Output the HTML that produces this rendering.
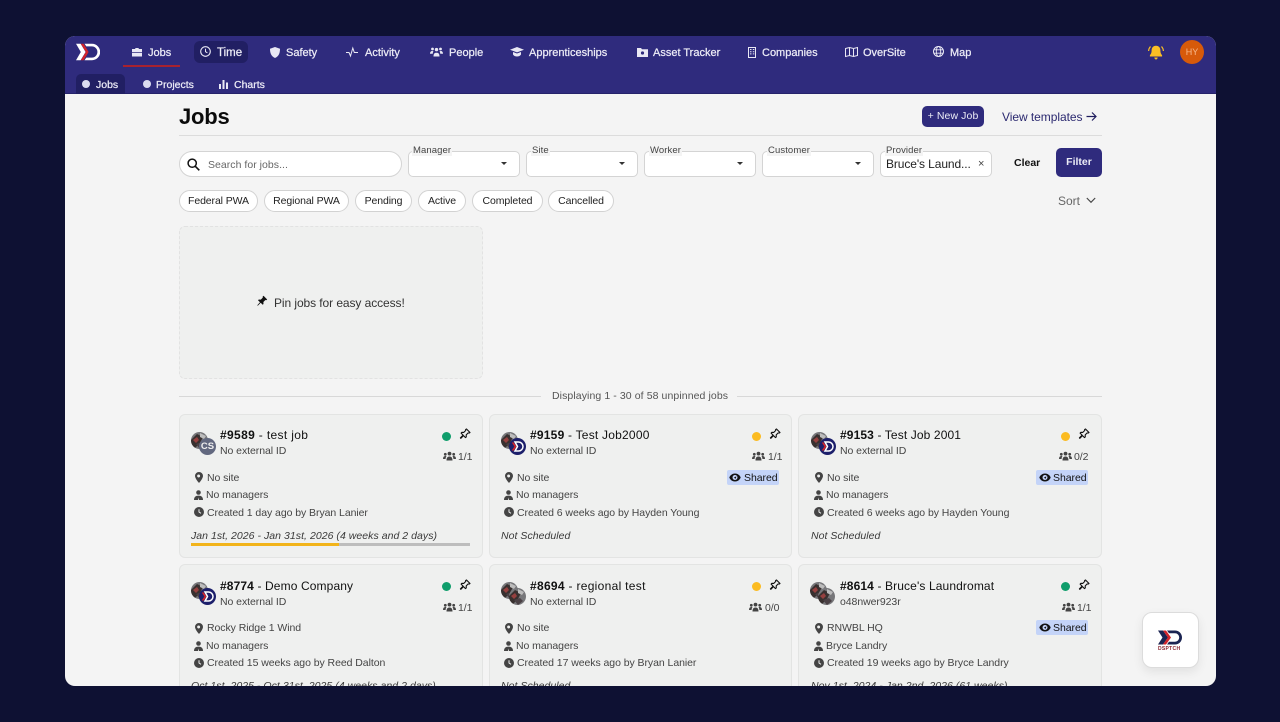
<!DOCTYPE html>
<html><head><meta charset="utf-8"><style>
html,body{margin:0;padding:0;width:1280px;height:722px;overflow:hidden;background:#0e1133;font-family:"Liberation Sans",sans-serif}
#f{position:absolute;left:65px;top:36px;width:1151px;height:650px;border-radius:10px;overflow:hidden;background:#f4f4f4}
#in{position:absolute;left:-65px;top:-36px;width:1280px;height:722px}
.a{position:absolute}
.t{position:absolute;white-space:nowrap;line-height:14px;height:14px;margin-top:-7px}
.n{font-size:11px;color:#eceBf6;-webkit-text-stroke:.25px #eceBf6;margin-top:-6.5px}
.i{position:absolute;overflow:visible}
.p{border-radius:50%;overflow:hidden}
.sel{position:absolute;top:151px;height:24px;width:110px;background:#fff;border:1px solid #d4d4d4;border-radius:5px}
.lab{position:absolute;top:145px;height:11px;line-height:11px;font-size:9.5px;color:#444;background:#f4f4f4;padding:0 1px;letter-spacing:.1px}
.car{position:absolute;top:162px;width:0;height:0;border-left:3.5px solid transparent;border-right:3.5px solid transparent;border-top:3.5px solid #333}
.chip{position:absolute;top:190px;height:20px;line-height:20px;background:#fff;border:1px solid #d2d2d2;border-radius:11px;text-align:center;font-size:10.5px;color:#222;letter-spacing:-.1px}
.card{position:absolute;width:302px;height:142px;background:#eff0ef;border:1px solid #e3e4e3;border-radius:6px}
.ti{font-size:12px;color:#111;letter-spacing:.12px}.ti b{font-weight:bold}
.s{font-size:10.5px;color:#444;letter-spacing:-.06px}
.it{font-style:italic;font-size:10.5px;color:#3a3a3a;letter-spacing:.04px}
.dot{position:absolute;width:9px;height:9px;border-radius:50%}
.sh{position:absolute;width:52px;height:15px;background:#c4d4f8;border-radius:2px}
.av{position:absolute;width:17px;height:17px;border-radius:50%;overflow:hidden}
</style></head><body>
<svg width="0" height="0" style="position:absolute">
<defs>
<symbol id="pin" viewBox="0 0 12 12"><path d="M7.500 1l3.500 3.500-1 .6-.8-.2-2 2 .1 1.900-.8.8-2-2L1.800 10.300l-.4-.4 2.700-2.800-2-2 .8-.8 1.900.1 2-2-.2-.8z" fill="none" stroke="#111" stroke-width="1.100" stroke-linejoin="round"/></symbol>
<symbol id="ppl" viewBox="0 0 13 10"><circle cx="6.500" cy="2.600" r="1.900" fill="#444"/><circle cx="2.300" cy="3.300" r="1.400" fill="#444"/><circle cx="10.700" cy="3.300" r="1.400" fill="#444"/><path d="M3.500 9.500c0-3 1.200-4 3-4s3 1 3 4zM0 8c0-2 .8-3 2.300-3 .6 0 1 .2 1.200.4C2.900 6 2.600 7 2.600 8zM13 8c0-2-.8-3-2.300-3-.6 0-1 .2-1.200.4.600.6.900 1.600.900 2.600z" fill="#444"/></symbol>
<symbol id="loc" viewBox="0 0 8 11"><path d="M4 0a4 4 0 0 0-4 4c0 2.500 4 7 4 7s4-4.500 4-7a4 4 0 0 0-4-4zm0 5.400A1.500 1.500 0 1 1 4 2.500a1.500 1.500 0 0 1 0 2.900z" fill="#444"/></symbol>
<symbol id="mgr" viewBox="0 0 9 10"><circle cx="4.500" cy="2.500" r="2.300" fill="#444"/><path d="M0 10c0-3 1.500-4.400 4.500-4.400S9 7 9 10H5l-.5-2.500L4 10z" fill="#444"/></symbol>
<symbol id="clk" viewBox="0 0 10 10"><circle cx="5" cy="5" r="5" fill="#444"/><path d="M5 2.200V5l2 1.300" fill="none" stroke="#eff0ef" stroke-width="1"/></symbol>
<symbol id="eye" viewBox="0 0 12 9"><path d="M6 .5C3.500.5 1.300 2 .3 4.500 1.300 7 3.500 8.500 6 8.500s4.700-1.500 5.700-4C10.700 2 8.500.5 6 .5z" fill="#111"/><circle cx="6" cy="4.500" r="2.500" fill="#c4d4f8"/><path d="M4.800 4.800L7.300 3.200 6.800 5.800z" fill="#111"/></symbol>
<symbol id="ph" viewBox="0 0 17 17"><rect width="17" height="17" fill="#77777a"/><path d="M0 8L6 2l6 3-3 6-6 6H0z" fill="#38302f"/><path d="M2 8l4-3 2 3-3 3z" fill="#95403f"/><path d="M9 1l6 3-2 3-4-2z" fill="#bcbcbc"/><path d="M5 12l6-2 3 3-5 4z" fill="#4a4044"/></symbol>
<symbol id="dav" viewBox="0 0 17 17"><circle cx="8.500" cy="8.500" r="8.500" fill="#1c1f6b"/><path d="M6 4h3.500a4.500 4.500 0 0 1 0 9H6l2.500-4.500z" fill="none" stroke="#fff" stroke-width="1.500"/><path d="M2.800 4.500h2l2.600 4-2.600 4h-2l2.600-4z" fill="#d2232a"/></symbol>
<symbol id="logo" viewBox="0 0 24 18"><path d="M0 .8h4.600l5 8.200-5 8.200H0L4.800 9z" fill="#fff"/><path d="M4.800 .8h2.800l5 8.200-5 8.200H4.800L9.800 9z" fill="#d2232a"/><path d="M8.500.8h7.500a8.200 8.200 0 0 1 0 16.400H8.500l1.800-2.600h5.500a5.600 5.600 0 0 0 0-11.200h-5.500z" fill="#fff"/></symbol>
</defs></svg>

<div id="f"><div id="in">
<!-- header -->
<div class="a" style="left:0;top:0;width:1280px;height:94px;background:#2f2b7d;border-bottom:1px solid #25226a;box-sizing:border-box"></div>
<svg class="i" style="left:76px;top:43px" width="24" height="18"><use href="#logo"/></svg>
<div class="a" style="left:123px;top:65px;width:57px;height:2px;background:#a8222f"></div>
<div class="a" style="left:194px;top:41px;width:54px;height:22px;background:#211f63;border-radius:6px"></div>

<svg class="i" style="left:132px;top:47px" width="10" height="10" viewBox="0 0 10 10"><path d="M3.300 2V1h3.400v1H10v3H0V2zM0 5.800h10V9.500H0z" fill="#e9e8f4"/></svg>
<span class="t n" style="left:148px;top:52px">Jobs</span>
<svg class="i" style="left:200px;top:46px" width="11" height="11" viewBox="0 0 11 11"><circle cx="5.500" cy="5.500" r="4.800" fill="none" stroke="#e9e8f4" stroke-width="1.100"/><path d="M5.500 2.800v2.900l1.900 1.100" fill="none" stroke="#e9e8f4" stroke-width="1"/></svg>
<span class="t n" style="left:217px;top:52px;font-size:11.500px">Time</span>
<svg class="i" style="left:270px;top:47px" width="10" height="11" viewBox="0 0 10 11"><path d="M5 0l5 1.700c0 4-1 7.500-5 9.300C1 9.200 0 5.700 0 1.700z" fill="#e9e8f4"/></svg>
<span class="t n" style="left:286px;top:52px">Safety</span>
<svg class="i" style="left:346px;top:47px" width="12" height="10" viewBox="0 0 12 10"><path d="M0 5.500h3L4.500 9 6.800 1 8.300 5.500H12" fill="none" stroke="#e9e8f4" stroke-width="1"/></svg>
<span class="t n" style="left:365px;top:52px">Activity</span>
<svg class="i" style="left:430px;top:47px" width="13" height="10" viewBox="0 0 13 10"><circle cx="6.500" cy="2.600" r="1.700" fill="#e9e8f4"/><circle cx="2.500" cy="2" r="1.400" fill="#e9e8f4"/><circle cx="10.500" cy="2" r="1.400" fill="#e9e8f4"/><path d="M3.500 9.500c0-3 1.200-3.800 3-3.800s3 .8 3 3.800zM0 6.800c0-1.800.8-2.800 2.500-2.800l1 .4C2.900 5.100 2.800 6 2.800 6.800zM13 6.800c0-1.800-.8-2.800-2.500-2.800l-1 .4c.6.700.7 1.600.7 2.400z" fill="#e9e8f4"/></svg>
<span class="t n" style="left:449px;top:52px">People</span>
<svg class="i" style="left:510px;top:47px" width="14" height="10" viewBox="0 0 14 10"><path d="M7 0l7 2.700L7 5.400 0 2.700zM3 5l4 1.500L11 5v2.500C10 9 8.500 9.500 7 9.500S4 9 3 7.500z" fill="#e9e8f4"/></svg>
<span class="t n" style="left:529px;top:52px">Apprenticeships</span>
<svg class="i" style="left:637px;top:47px" width="11" height="10" viewBox="0 0 11 10"><path d="M0 1h4l1 1.200h6V10H0z" fill="#e9e8f4"/><circle cx="5.500" cy="6" r="1.600" fill="#2f2b7d"/></svg>
<span class="t n" style="left:653px;top:52px">Asset Tracker</span>
<svg class="i" style="left:748px;top:47px" width="8" height="11" viewBox="0 0 8 11"><rect x=".5" y=".5" width="7" height="10" fill="none" stroke="#e9e8f4"/><path d="M2 2.500h1.500M4.800 2.500h1.500M2 4.700h1.500M4.800 4.700h1.500M2 6.900h1.500M4.800 6.900h1.500" stroke="#e9e8f4" stroke-width="1"/></svg>
<span class="t n" style="left:762px;top:52px">Companies</span>
<svg class="i" style="left:845px;top:47px" width="13" height="10" viewBox="0 0 13 10"><path d="M.5 1.500L4.500.5l4 1 4-1v8l-4 1-4-1-4 1zM4.500.5v8M8.500 1.500v8" fill="none" stroke="#e9e8f4" stroke-width="1"/></svg>
<span class="t n" style="left:863px;top:52px">OverSite</span>
<svg class="i" style="left:933px;top:46px" width="11" height="11" viewBox="0 0 11 11"><circle cx="5.500" cy="5.500" r="5" fill="none" stroke="#e9e8f4"/><ellipse cx="5.500" cy="5.500" rx="2.200" ry="5" fill="none" stroke="#e9e8f4" stroke-width=".9"/><path d="M.5 3.800h10M.5 7.200h10" stroke="#e9e8f4" stroke-width=".9"/></svg>
<span class="t n" style="left:950px;top:52px">Map</span>

<svg class="i" style="left:1148px;top:45px" width="16" height="15" viewBox="0 0 16 15"><path d="M8 .8c-3 0-4.400 2.200-4.400 4.700 0 2.600-.9 3.700-1.700 4.700V11.500h12.200v-1.300c-.8-1-1.700-2.100-1.700-4.700C12.400 3 11 .8 8 .8z" fill="#fbbf24"/><path d="M6.300 12.500h3.400C9.500 13.800 8.800 14.500 8 14.500s-1.500-.7-1.700-2z" fill="#fbbf24"/><path d="M2.500 1.500C1.300 2.800.7 4.200.6 6M13.500 1.500c1.200 1.300 1.800 2.700 1.900 4.500" fill="none" stroke="#fbbf24" stroke-width="1.200"/></svg>
<div class="a" style="left:1180px;top:40px;width:24px;height:24px;border-radius:50%;background:#d75a0a;color:#f7b98c;font-size:9px;line-height:24px;text-align:center">HY</div>

<div class="a" style="left:76px;top:74px;width:49px;height:20px;background:#211f63;border-radius:5px 5px 0 0"></div>
<div class="a" style="left:82px;top:80px;width:8px;height:8px;border-radius:50%;background:#dcdcf0"></div>
<span class="t n" style="left:96px;top:84.500px;font-size:10.500px">Jobs</span>
<div class="a" style="left:143px;top:80px;width:8px;height:8px;border-radius:50%;background:#dcdcf0"></div>
<span class="t n" style="left:156px;top:84.500px;font-size:10.500px">Projects</span>
<svg class="i" style="left:219px;top:80px" width="9" height="9" viewBox="0 0 9 9"><path d="M0 4h2v5H0zM3.500 0h2v9h-2zM7 2.500h2V9H7z" fill="#e9e8f4"/></svg>
<span class="t n" style="left:234px;top:84.500px;font-size:10.500px">Charts</span>

<!-- title row -->
<span class="t" style="left:179px;top:117px;font-size:22px;font-weight:bold;color:#0b0b0b;height:24px;line-height:24px;margin-top:-12px;letter-spacing:-.2px">Jobs</span>
<div class="a" style="left:179px;top:135px;width:923px;height:1px;background:#dcdcdc"></div>
<div class="a" style="left:922px;top:106px;width:62px;height:21px;background:#2f2b7d;border-radius:5px;color:#ececf6;font-size:10.500px;line-height:21px;text-align:center;letter-spacing:.1px">+ New Job</div>
<span class="t" style="left:1002px;top:116.500px;font-size:12px;color:#2b2970;letter-spacing:-.05px">View templates</span>
<svg class="i" style="left:1086px;top:111px" width="11" height="11" viewBox="0 0 11 11"><path d="M.5 5.500h9M6 1.500l4 4-4 4" fill="none" stroke="#1f1d5e" stroke-width="1.200"/></svg>

<!-- filters -->
<div class="a" style="left:179px;top:151px;width:221px;height:24px;background:#fff;border:1px solid #d4d4d4;border-radius:13px"></div>
<svg class="i" style="left:187px;top:158px" width="13" height="13" viewBox="0 0 13 13"><circle cx="5.200" cy="5.200" r="4.100" fill="none" stroke="#111" stroke-width="1.500"/><path d="M8.300 8.300l4 4" stroke="#111" stroke-width="1.600"/></svg>
<span class="t" style="left:208px;top:164.500px;font-size:10.500px;color:#666;letter-spacing:.03px">Search for jobs...</span>

<div class="sel" style="left:408px"></div><span class="lab" style="left:412px">Manager</span><div class="car" style="left:501px"></div>
<div class="sel" style="left:526px"></div><span class="lab" style="left:531px">Site</span><div class="car" style="left:619px"></div>
<div class="sel" style="left:644px"></div><span class="lab" style="left:649px">Worker</span><div class="car" style="left:737px"></div>
<div class="sel" style="left:762px"></div><span class="lab" style="left:767px">Customer</span><div class="car" style="left:855px"></div>
<div class="sel" style="left:880px"></div><span class="lab" style="left:885px">Provider</span>
<span class="t" style="left:886px;top:163.500px;font-size:12px;color:#222;letter-spacing:-.1px">Bruce's Laund...</span>
<span class="t" style="left:978px;top:164px;font-size:11px;color:#444">×</span>
<span class="t" style="left:1014px;top:162.500px;font-size:10.500px;font-weight:bold;color:#111">Clear</span>
<div class="a" style="left:1056px;top:148px;width:46px;height:29px;background:#2f2b7d;border-radius:5px;color:#ececf6;font-size:10.500px;font-weight:bold;line-height:29px;text-align:center">Filter</div>

<div class="chip" style="left:179px;width:77px">Federal PWA</div>
<div class="chip" style="left:264px;width:83px">Regional PWA</div>
<div class="chip" style="left:355px;width:55px">Pending</div>
<div class="chip" style="left:418px;width:46px">Active</div>
<div class="chip" style="left:472px;width:69px">Completed</div>
<div class="chip" style="left:548px;width:64px">Cancelled</div>
<span class="t" style="left:1058px;top:201px;font-size:12px;color:#666">Sort</span>
<svg class="i" style="left:1086px;top:197px" width="10" height="7" viewBox="0 0 10 7"><path d="M.8 1l4.200 4.300L9.200 1" fill="none" stroke="#444" stroke-width="1.100"/></svg>

<!-- pin box -->
<div class="a" style="left:179px;top:226px;width:302px;height:151px;background:#eff0ef;border:1px dashed #e2e2e2;border-radius:6px"></div>
<svg class="i" style="left:256px;top:295px" width="12" height="12" viewBox="0 0 12 12"><path d="M7.500.8l3.700 3.700-1 .7-.8-.2-2 2 .1 2-.8.8-2-2L1.800 10.700l-.5-.5L4 7.300l-2-2 .8-.8 2 .1 2-2-.2-.8z" fill="#111"/></svg>
<span class="t" style="left:274px;top:303px;font-size:12px;color:#333;letter-spacing:-.08px">Pin jobs for easy access!</span>

<div class="a" style="left:179px;top:395.500px;width:362px;height:1px;background:#d8d8d8"></div>
<div class="a" style="left:737px;top:395.500px;width:365px;height:1px;background:#d8d8d8"></div>
<span class="t" style="left:552px;top:396px;font-size:10.500px;color:#555;letter-spacing:.09px">Displaying 1 - 30 of 58 unpinned jobs</span>

<!-- card 1 -->
<div class="card" style="left:179px;top:414px"></div>
<svg class="i p" style="left:191px;top:432px" width="17" height="17"><use href="#ph"/></svg>
<div class="av" style="left:199px;top:438px;background:#62687f;color:#eee;font-size:9.500px;font-weight:bold;line-height:17px;text-align:center">CS</div>
<span class="t ti" style="left:220px;top:435px;letter-spacing:.35px"><b>#9589</b> - test job</span>
<span class="t s" style="left:220px;top:451px">No external ID</span>
<div class="dot" style="left:442px;top:431.500px;background:#0f9d6b"></div>
<svg class="i" style="left:459px;top:428px" width="12" height="12"><use href="#pin"/></svg>
<svg class="i" style="left:443px;top:451px" width="13" height="10"><use href="#ppl"/></svg>
<span class="t s" style="left:458px;top:457px">1/1</span>
<svg class="i" style="left:195px;top:472px" width="8" height="11"><use href="#loc"/></svg>
<span class="t s" style="left:207px;top:477.500px">No site</span>
<svg class="i" style="left:194px;top:490px" width="9" height="10"><use href="#mgr"/></svg>
<span class="t s" style="left:206px;top:495px">No managers</span>
<svg class="i" style="left:194px;top:507px" width="10" height="10"><use href="#clk"/></svg>
<span class="t s" style="left:207px;top:512.500px">Created 1 day ago by Bryan Lanier</span>
<span class="t it" style="left:191px;top:535.500px">Jan 1st, 2026 - Jan 31st, 2026 (4 weeks and 2 days)</span>
<div class="a" style="left:191px;top:543px;width:279px;height:3px;background:#bdbdbd"></div>
<div class="a" style="left:191px;top:543px;width:148px;height:3px;background:#f2b41b"></div>

<!-- card 2 -->
<div class="card" style="left:489px;top:414px;width:301px"></div>
<svg class="i p" style="left:501px;top:432px" width="17" height="17"><use href="#ph"/></svg>
<svg class="i" style="left:509px;top:438px" width="17" height="17"><use href="#dav"/></svg>
<span class="t ti" style="left:530px;top:435px;letter-spacing:.22px"><b>#9159</b> - Test Job2000</span>
<span class="t s" style="left:530px;top:451px">No external ID</span>
<div class="dot" style="left:752px;top:431.500px;background:#fbbb21"></div>
<svg class="i" style="left:769px;top:428px" width="12" height="12"><use href="#pin"/></svg>
<svg class="i" style="left:752px;top:451px" width="13" height="10"><use href="#ppl"/></svg>
<span class="t s" style="left:768px;top:457px">1/1</span>
<div class="sh" style="left:727px;top:470px"></div>
<svg class="i" style="left:729px;top:473px" width="12" height="9"><use href="#eye"/></svg>
<span class="t s" style="left:744px;top:477.500px;color:#111">Shared</span>
<svg class="i" style="left:505px;top:472px" width="8" height="11"><use href="#loc"/></svg>
<span class="t s" style="left:517px;top:477.500px">No site</span>
<svg class="i" style="left:504px;top:490px" width="9" height="10"><use href="#mgr"/></svg>
<span class="t s" style="left:516px;top:495px">No managers</span>
<svg class="i" style="left:504px;top:507px" width="10" height="10"><use href="#clk"/></svg>
<span class="t s" style="left:517px;top:512.500px">Created 6 weeks ago by Hayden Young</span>
<span class="t it" style="left:501px;top:535.500px">Not Scheduled</span>

<!-- card 3 -->
<div class="card" style="left:798px;top:414px"></div>
<svg class="i p" style="left:811px;top:432px" width="17" height="17"><use href="#ph"/></svg>
<svg class="i" style="left:819px;top:438px" width="17" height="17"><use href="#dav"/></svg>
<span class="t ti" style="left:840px;top:435px"><b>#9153</b> - Test Job 2001</span>
<span class="t s" style="left:840px;top:451px">No external ID</span>
<div class="dot" style="left:1061px;top:431.500px;background:#fbbb21"></div>
<svg class="i" style="left:1078px;top:428px" width="12" height="12"><use href="#pin"/></svg>
<svg class="i" style="left:1059px;top:451px" width="13" height="10"><use href="#ppl"/></svg>
<span class="t s" style="left:1074px;top:457px">0/2</span>
<div class="sh" style="left:1036px;top:470px"></div>
<svg class="i" style="left:1039px;top:473px" width="12" height="9"><use href="#eye"/></svg>
<span class="t s" style="left:1053px;top:477.500px;color:#111">Shared</span>
<svg class="i" style="left:815px;top:472px" width="8" height="11"><use href="#loc"/></svg>
<span class="t s" style="left:827px;top:477.500px">No site</span>
<svg class="i" style="left:814px;top:490px" width="9" height="10"><use href="#mgr"/></svg>
<span class="t s" style="left:826px;top:495px">No managers</span>
<svg class="i" style="left:814px;top:507px" width="10" height="10"><use href="#clk"/></svg>
<span class="t s" style="left:827px;top:512.500px">Created 6 weeks ago by Hayden Young</span>
<span class="t it" style="left:811px;top:535.500px">Not Scheduled</span>

<!-- row 2 card 1 -->
<div class="card" style="left:179px;top:564px"></div>
<svg class="i p" style="left:191px;top:582px" width="17" height="17"><use href="#ph"/></svg>
<svg class="i" style="left:199px;top:588px" width="17" height="17"><use href="#dav"/></svg>
<span class="t ti" style="left:220px;top:585.500px"><b>#8774</b> - Demo Company</span>
<span class="t s" style="left:220px;top:601.500px">No external ID</span>
<div class="dot" style="left:442px;top:581.500px;background:#0f9d6b"></div>
<svg class="i" style="left:459px;top:578.500px" width="12" height="12"><use href="#pin"/></svg>
<svg class="i" style="left:443px;top:601.500px" width="13" height="10"><use href="#ppl"/></svg>
<span class="t s" style="left:458px;top:607.500px">1/1</span>
<svg class="i" style="left:195px;top:622.500px" width="8" height="11"><use href="#loc"/></svg>
<span class="t s" style="left:207px;top:628px">Rocky Ridge 1 Wind</span>
<svg class="i" style="left:194px;top:640.500px" width="9" height="10"><use href="#mgr"/></svg>
<span class="t s" style="left:206px;top:645.500px">No managers</span>
<svg class="i" style="left:194px;top:657.500px" width="10" height="10"><use href="#clk"/></svg>
<span class="t s" style="left:207px;top:663px">Created 15 weeks ago by Reed Dalton</span>
<span class="t it" style="left:191px;top:686px">Oct 1st, 2025 - Oct 31st, 2025 (4 weeks and 2 days)</span>

<!-- row 2 card 2 -->
<div class="card" style="left:489px;top:564px;width:301px"></div>
<svg class="i p" style="left:501px;top:582px" width="17" height="17"><use href="#ph"/></svg>
<svg class="i p" style="left:509px;top:588px" width="17" height="17"><use href="#ph"/></svg>
<span class="t ti" style="left:530px;top:585.500px;letter-spacing:.3px"><b>#8694</b> - regional test</span>
<span class="t s" style="left:530px;top:601.500px">No external ID</span>
<div class="dot" style="left:752px;top:581.500px;background:#fbbb21"></div>
<svg class="i" style="left:769px;top:578.500px" width="12" height="12"><use href="#pin"/></svg>
<svg class="i" style="left:749px;top:601.500px" width="13" height="10"><use href="#ppl"/></svg>
<span class="t s" style="left:765px;top:607.500px">0/0</span>
<svg class="i" style="left:505px;top:622.500px" width="8" height="11"><use href="#loc"/></svg>
<span class="t s" style="left:517px;top:628px">No site</span>
<svg class="i" style="left:504px;top:640.500px" width="9" height="10"><use href="#mgr"/></svg>
<span class="t s" style="left:516px;top:645.500px">No managers</span>
<svg class="i" style="left:504px;top:657.500px" width="10" height="10"><use href="#clk"/></svg>
<span class="t s" style="left:517px;top:663px">Created 17 weeks ago by Bryan Lanier</span>
<span class="t it" style="left:501px;top:686px">Not Scheduled</span>

<!-- row 2 card 3 -->
<div class="card" style="left:798px;top:564px"></div>
<svg class="i p" style="left:810px;top:582px" width="17" height="17"><use href="#ph"/></svg>
<svg class="i p" style="left:818px;top:588px" width="17" height="17"><use href="#ph"/></svg>
<span class="t ti" style="left:840px;top:585.500px"><b>#8614</b> - Bruce's Laundromat</span>
<span class="t s" style="left:840px;top:601.500px">o48nwer923r</span>
<div class="dot" style="left:1061px;top:581.500px;background:#0f9d6b"></div>
<svg class="i" style="left:1078px;top:578.500px" width="12" height="12"><use href="#pin"/></svg>
<svg class="i" style="left:1062px;top:601.500px" width="13" height="10"><use href="#ppl"/></svg>
<span class="t s" style="left:1077px;top:607.500px">1/1</span>
<div class="sh" style="left:1036px;top:620px"></div>
<svg class="i" style="left:1039px;top:623px" width="12" height="9"><use href="#eye"/></svg>
<span class="t s" style="left:1053px;top:628px;color:#111">Shared</span>
<svg class="i" style="left:815px;top:622.500px" width="8" height="11"><use href="#loc"/></svg>
<span class="t s" style="left:827px;top:628px">RNWBL HQ</span>
<svg class="i" style="left:814px;top:640.500px" width="9" height="10"><use href="#mgr"/></svg>
<span class="t s" style="left:826px;top:645.500px">Bryce Landry</span>
<svg class="i" style="left:814px;top:657.500px" width="10" height="10"><use href="#clk"/></svg>
<span class="t s" style="left:827px;top:663px">Created 19 weeks ago by Bryce Landry</span>
<span class="t it" style="left:811px;top:686px">Nov 1st, 2024 - Jan 2nd, 2026 (61 weeks)</span>

<!-- float -->
<div class="a" style="left:1142px;top:612px;width:55px;height:54px;background:#fff;border:1px solid #dcdcdc;border-radius:10px;box-shadow:0 4px 10px rgba(0,0,0,.08)"></div>
<svg class="i" style="left:1158px;top:630px" width="25" height="15" viewBox="0 0 25 15"><path d="M0 .5h5l5 7-5 7H0L4.500 7.500z" fill="#1b2452"/><path d="M5 .5h3l5 7-5 7H5l4.800-7z" fill="#d2232a"/><path d="M9 .5h8a7 7 0 0 1 0 14H9l2-2.800h6a4.200 4.200 0 0 0 0-8.400h-6z" fill="#1b2452"/></svg>
<span class="t" style="left:1158px;top:649px;font-size:5px;font-weight:bold;color:#8a2430;letter-spacing:.3px">DSPTCH</span>
</div></div>
</body></html>
